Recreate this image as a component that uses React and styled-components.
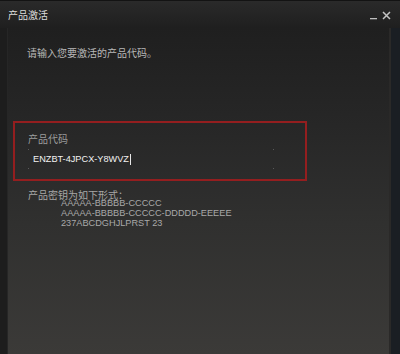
import React from "react"
import styled, { createGlobalStyle } from "styled-components"

const GlobalStyle = createGlobalStyle`
  html, body {
    margin: 0;
    padding: 0;
    background: #1b1b1b;
  }
  body {
    font-family: "Liberation Sans", "Noto Sans CJK SC", sans-serif;
  }
`

// Fenster
const Window = styled.div`
  width: 400px;
  height: 354px;
  display: flex;
  flex-direction: column;
  overflow: hidden;
  background: #1d1d1d;
`

const TitleBar = styled.div`
  height: 28px;
  flex: none;
  display: flex;
  align-items: center;
  justify-content: space-between;
  padding: 0 9px 0 8px;
  box-sizing: border-box;
  border-top: 1px solid #131313;
  background: linear-gradient(#2a2a2a, #1f1f1f);
`

const Title = styled.div`
  font-family: "Noto Sans CJK SC", sans-serif;
  font-size: 10px;
  line-height: 12px;
  color: #dcdcdc;
  margin-top: 1px;
`

const Controls = styled.div`
  display: flex;
  align-items: center;
  gap: 4px;
  margin-top: 2px;
`

const Body = styled.div`
  flex: 1;
  display: flex;
  flex-direction: column;
  padding: 19px 0 0 6px;
  border-left: 7px solid #1d1d1d;
  border-right: 9px solid #1a1e23;
  box-shadow: inset -2px 0 0 #2a2928, inset 1px 0 0 #262626;
  background: linear-gradient(#1f1f1f 0%, #272727 30%, #30302f 60%, #3b3a38 100%);
`

const Intro = styled.div`
  font-family: "Noto Sans CJK SC", sans-serif;
  font-size: 10px;
  line-height: 12px;
  color: #b8b8b8;
  margin-left: 14px;
`

const CodeBox = styled.div`
  margin-top: 62px;
  width: 294px;
  box-sizing: border-box;
  border: 2px solid #941e1f;
  padding: 10px 31px 10px 13px;
`

const Label = styled.div`
  font-family: "Noto Sans CJK SC", sans-serif;
  font-size: 10px;
  line-height: 12px;
  color: ${(p) => p.$color || "#9c9c9c"};
`

const Field = styled.div`
  margin-top: 4px;
  height: 20px;
  display: flex;
  align-items: center;
  padding-left: 5px;
  background:
    linear-gradient(#5a5a5a, #5a5a5a) left top / 1px 1px no-repeat,
    linear-gradient(#5a5a5a, #5a5a5a) right top / 1px 1px no-repeat,
    linear-gradient(#5a5a5a, #5a5a5a) left bottom / 1px 1px no-repeat,
    linear-gradient(#5a5a5a, #5a5a5a) right bottom / 1px 1px no-repeat;
`

const Value = styled.span`
  font-size: 9.2px;
  line-height: 12px;
  color: #f2f2f2;
`

const Caret = styled.span`
  display: inline-block;
  width: 1px;
  height: 11px;
  background: #e8e8e8;
  margin-left: 1px;
  vertical-align: -2px;
`

const Format = styled.div`
  margin: 9px 0 0 15px;
`

const FormatLabel = styled.div`
  font-family: "Noto Sans CJK SC", sans-serif;
  font-size: 10px;
  line-height: 10px;
  color: #a6a6a6;
`

const FormatList = styled.div`
  margin: -2.5px 0 0 33px;
  display: flex;
  flex-direction: column;
`

const FormatLine = styled.div`
  font-size: 9.2px;
  line-height: 10px;
  color: #a9a9a9;
`

const formats = [
  "AAAAA-BBBBB-CCCCC",
  "AAAAA-BBBBB-CCCCC-DDDDD-EEEEE",
  "237ABCDGHJLPRST 23",
]

function MinimizeIcon() {
  return (
    <svg width="8" height="9" viewBox="0 0 8 9">
      <rect x="0" y="7" width="7" height="1.3" fill="#bdbdbd" />
    </svg>
  )
}

function CloseIcon() {
  return (
    <svg width="9" height="9" viewBox="0 0 9 9">
      <path d="M1 1 L8 8 M8 1 L1 8" stroke="#c4c4c4" strokeWidth="1.5" />
    </svg>
  )
}

export default function App() {
  return (
    <>
      <GlobalStyle />
      <Window>
        <TitleBar>
          <Title>产品激活</Title>
          <Controls>
            <MinimizeIcon />
            <CloseIcon />
          </Controls>
        </TitleBar>
        <Body>
          <Intro>请输入您要激活的产品代码。</Intro>
          <CodeBox>
            <Label>产品代码</Label>
            <Field>
              <Value>ENZBT-4JPCX-Y8WVZ</Value>
              <Caret />
            </Field>
          </CodeBox>
          <Format>
            <FormatLabel>产品密钥为如下形式：</FormatLabel>
            <FormatList>
              {formats.map((f) => (
                <FormatLine key={f}>{f}</FormatLine>
              ))}
            </FormatList>
          </Format>
        </Body>
      </Window>
    </>
  )
}
